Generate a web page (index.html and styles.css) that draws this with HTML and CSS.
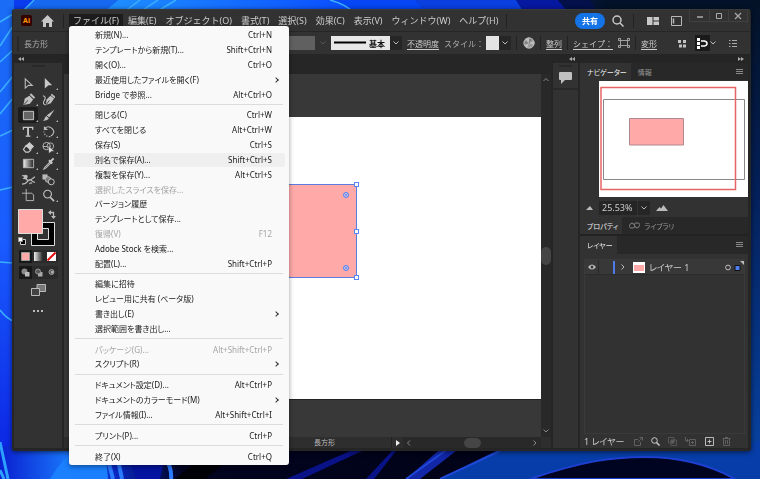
FILE: index.html
```html
<!DOCTYPE html>
<html lang="ja">
<head>
<meta charset="UTF-8">
<title>Illustrator</title>
<link rel="stylesheet" href="styles.css">
</head>
<body>
<svg class="wallpaper" viewBox="0 0 760 479" preserveAspectRatio="none" aria-hidden="true">
  <defs>
    <linearGradient id="sky"><stop offset="0" stop-color="#0a3cf0"/><stop offset=".5" stop-color="#0a2fd8"/><stop offset=".7" stop-color="#041a6a"/><stop offset=".8" stop-color="#031228"/><stop offset="1" stop-color="#031228"/></linearGradient>
    <linearGradient id="left" x2="0" y2="1"><stop offset="0" stop-color="#1a6cf5"/><stop offset=".5" stop-color="#1a5cff"/><stop offset="1" stop-color="#0a20e0"/></linearGradient>
    <linearGradient id="petal"><stop offset="0" stop-color="#1f90ff"/><stop offset="1" stop-color="#0a4cff"/></linearGradient>
    <linearGradient id="right" x2="0" y2="1"><stop offset="0" stop-color="#041226"/><stop offset=".4" stop-color="#04205a"/><stop offset="1" stop-color="#0845a8"/></linearGradient>
    <linearGradient id="floor"><stop offset="0" stop-color="#0a1fd0"/><stop offset=".1" stop-color="#1a80ff"/><stop offset=".15" stop-color="#0828c8"/><stop offset=".24" stop-color="#020420"/><stop offset="1" stop-color="#010210"/></linearGradient>
  </defs>
  <rect width="760" height="479" fill="url(#sky)"/>
  <rect width="14" height="479" fill="url(#left)"/>
  <rect x="748" width="12" height="479" fill="url(#right)"/>
  <rect y="446" width="760" height="33" fill="url(#floor)"/>
  <path d="M34 0H118L104 12H22z" fill="#1668f0"/>
  <path d="M118 0H330Q345 4 353 12H104z" fill="url(#petal)"/>
  <path d="M330 0H415L427 12H353Q345 4 330 0z" fill="#0546f5"/>
  <path d="M415 0H516L524 12H427z" fill="#0a3fe0"/>
  <path d="M516 0H558L568 12H524z" fill="#0618a0"/>
  <path d="M558 0H590L597 12H568z" fill="#03104a"/>
  <path d="M34 0L22 12M140 0L124 12M158 0L140 12M176 0L156 12M330 0Q345 4 353 12M0 22L13 14M0 46L13 26M0 62L13 50M0 92L13 76M0 114L13 98M0 136L13 130M0 190L13 187M0 262L13 263M0 310Q6 318 13 321" stroke="#3bb0ff" stroke-width="1.5" fill="none"/>
  <path d="M0 442L8 479M0 470L4 479" stroke="#2ba0ff" stroke-width="3" fill="none"/>
  <path d="M50 479Q62 458 80 446H105L108 479z" fill="#1a80ff"/>
  <path d="M108 460L113 479M118 460L122 479M166 460Q172 468 171 479M156 460L153 479" stroke="#2b7bff" stroke-width="4" fill="none"/>
  <path d="M130 460H164L160 479H136z" fill="#0414a0"/>
  <path d="M175 479L210 451H240L205 479z" fill="#010108"/>
  <path d="M286 479L350 451H362L302 479zM366 479L392 451H396L374 479z" fill="#0a1288"/>
  <path d="M406 479L438 451H456L420 479z" fill="#1226a8"/>
  <path d="M440 479L496 451H740L760 440V479z" fill="#073da8"/>
  <path d="M440 479L500 451M406 479L445 451" stroke="#1f48d8" stroke-width="2"/>
  <path d="M530 479C580 462 610 457 645 457S710 465 735 479z" fill="#010420" stroke="#1d40d0" stroke-width="2"/>
</svg>

<div class="window">
  <header class="menubar">
    <span class="logo">Ai</span>
    <button class="icon-button home" aria-label="ホーム"><svg width="13" height="12" viewBox="0 0 13 12"><path d="M6.500 0L13 6.500H11V12H8V8H5V12H2V6.500H0z" fill="#c8c8c8"/></svg></button>
    <span class="rule"></span>
    <nav class="menus">
      <button class="open">ファイル(F)</button>
      <button>編集(E)</button>
      <button>オブジェクト(O)</button>
      <button>書式(T)</button>
      <button>選択(S)</button>
      <button>効果(C)</button>
      <button>表示(V)</button>
      <button>ウィンドウ(W)</button>
      <button>ヘルプ(H)</button>
    </nav>
    <span class="rule"></span>
    <div class="menubar-right">
      <button class="share">共有</button>
      <button class="icon-button search" aria-label="検索"><svg width="12" height="12" viewBox="0 0 12 12" fill="none" stroke="#c8c8c8" stroke-width="1.5"><circle cx="5" cy="5" r="4"/><path d="M8 8L11.500 11.500"/></svg></button>
      <span class="rule"></span>
      <button class="icon-button arrange" aria-label="ドキュメントレイアウト"><svg width="12" height="8" viewBox="0 0 12 8" fill="#c8c8c8"><path d="M0 0H5.500V8H0zM6.500 0H12V3.500H6.500zM6.500 4.500H12V8H6.500z"/></svg></button>
      <button class="icon-button" aria-label="ワークスペース"><svg width="11" height="10" viewBox="0 0 11 10" fill="none" stroke="#b8b8b8"><path d="M.5 .5H10.500V9.500H.5z"/><path d="M2.500 2.500V7.500" stroke-width="1.500"/></svg></button>
    </div>
    <div class="window-buttons">
      <button aria-label="最小化"><svg width="8" height="8"><path d="M1 5H7" stroke="#aaa" stroke-width="1.500"/></svg></button>
      <button aria-label="最大化"><svg width="8" height="8"><path d="M1.500 1.500H6.500V6.500H1.500z" stroke="#aaa" fill="none"/></svg></button>
      <button aria-label="閉じる"><svg width="8" height="8"><path d="M1 1L7 7M7 1L1 7" stroke="#aaa" stroke-width="1.200"/></svg></button>
    </div>
  </header>

  <div class="control-bar">
    <span class="grip"></span>
    <span class="object-type">長方形</span>
    <div class="control-items">
      <span class="disabled-box"></span>
      <svg class="caret dim" width="6" height="4"><path d="M.5 .5L3 3L5.500 .5" /></svg>
      <div class="picker profile">
        <svg width="32" height="13"><path d="M0 6.500H32" stroke="#000" stroke-width="2"/></svg>
        <select aria-label="ブラシ定義"><option>基本</option></select>
        <svg class="caret" width="6" height="4"><path d="M.5 .5L3 3L5.500 .5"/></svg>
      </div>
      <a href="#" class="opacity">不透明度</a>
      <label class="style-label" for="style">スタイル：</label>
      <div class="picker swatch-picker">
        <select id="style"><option></option></select>
        <svg class="caret" width="6" height="4"><path d="M.5 .5L3 3L5.500 .5"/></svg>
      </div>
      <span class="rule"></span>
      <button class="icon-button recolor" aria-label="オブジェクトを再配色"><svg width="12" height="12" viewBox="0 0 12 12"><circle cx="6" cy="6" r="5.500" fill="#9a9a9a"/><path d="M6 6L2 2A5.500 5.500 0 0 1 6 .5zM6 6L11 4A5.500 5.500 0 0 1 11 8zM6 6L4 11A5.500 5.500 0 0 1 1 8z" fill="#c0c0c0"/><path d="M6 6L6 .5A5.500 5.500 0 0 1 10 2zM6 6L1 8A5.500 5.500 0 0 1 1 4z" fill="#808080"/><circle cx="6" cy="6" r="5" fill="none" stroke="#b8b8b8"/></svg></button>
      <span class="rule"></span>
      <a href="#">整列</a>
      <span class="rule"></span>
      <a href="#">シェイプ：</a>
      <button class="icon-button" aria-label="分離"><svg width="12" height="10" viewBox="0 0 12 10" fill="none" stroke="#bbb"><path d="M2.500 2.500H9.500V7.500H2.500z" stroke-width=".8"/><path d="M.5 .5H2.500V2.500H.5zM9.500 .5H11.500V2.500H9.500zM.5 7.500H2.500V9.500H.5zM9.500 7.500H11.500V9.500H9.500z" stroke-width=".8"/></svg></button>
      <span class="rule"></span>
      <a href="#">変形</a>
      <button class="icon-button grid-snap" aria-label="整列パネル"><svg width="9" height="9" viewBox="0 0 9 9" fill="#c4c4c4"><path d="M0 1H3V4H0zM5 1H8V4H5zM1 5.500H4V8.500H1zM5 5.500H8V8.500H5z"/></svg></button>
      <div class="snap">
        <button class="icon-button snap-on" aria-label="ピクセルにスナップ"><svg width="11" height="11" viewBox="0 0 11 11"><path d="M0 0H3V3H0zM0 4H3V7H0zM0 8H3V11H0z" fill="#fff"/><path d="M4 3H7.500Q10 3.500 10 5.500T7.500 8H4" fill="none" stroke="#fff" stroke-width="1.500"/></svg></button>
        <svg class="caret" width="6" height="4"><path d="M.5 .5L3 3L5.500 .5"/></svg>
      </div>
      <button class="icon-button" aria-label="オプション"><svg width="8" height="7" viewBox="0 0 8 7" stroke="#aaa"><path d="M0 .5H1.500M3 .5H8M0 3.500H1.500M3 3.500H8M0 6.500H1.500M3 6.500H8"/></svg></button>
    </div>
  </div>

  <main class="workspace">
    <aside class="tools">
      <div class="collapse"><svg width="6" height="4"><path d="M3 0V4L0 2zM6 0V4L3 2z" fill="#aaa"/></svg></div>
      <div class="gripper"></div>
      <div class="tool-grid">
        <button aria-label="選択"><svg viewBox="0 0 14 14" fill="none" stroke="#bbb" stroke-width="1.200"><path d="M3.500 2L11 9H7L3.500 12z"/></svg></button>
        <button class="more" aria-label="ダイレクト選択"><svg viewBox="0 0 14 14"><path d="M3 1L11 9H7L3 12.500z" fill="#c8c8c8"/></svg></button>
        <button class="more" aria-label="ペン"><svg viewBox="0 0 14 14"><path d="M1.500 13L3 6L8 3L12 7L8.500 11.500z" fill="#c0c0c0"/><path d="M9 1L13.500 5.500" stroke="#c0c0c0" stroke-width="2.200"/><path d="M2 12.500L6.500 8" stroke="#323232"/></svg></button>
        <button aria-label="曲線"><svg viewBox="0 0 14 14"><path d="M4 13L5 7L9 3L13 6L9.500 11z" fill="#c0c0c0"/><path d="M10 1.500L14 5" stroke="#c0c0c0" stroke-width="2"/><path d="M4.500 12.500L8 8" stroke="#323232"/><path d="M1 3Q5 4 2.500 8T4 13" fill="none" stroke="#c0c0c0" stroke-width="1.200"/></svg></button>
        <button class="more selected" aria-label="長方形"><svg viewBox="0 0 14 14"><path d="M1.500 2.500H12.500V11.500H1.500z" fill="#666" stroke="#ccc"/></svg></button>
        <button class="more" aria-label="ブラシ"><svg viewBox="0 0 14 14"><path d="M13.500 .5L8 9L5 7z" fill="#c0c0c0"/><path d="M4.500 7.500L7.500 10Q6 13 1 12.500Q3.500 11 3 9.500z" fill="#c0c0c0"/></svg></button>
        <button class="more" aria-label="文字"><svg viewBox="0 0 14 14" fill="none" stroke="#c8c8c8"><path d="M1.500 5V2.500H11.500V5" stroke-width="1.400"/><path d="M6.500 3V11.500" stroke-width="2"/><path d="M4 12H9" stroke-width="1.400"/></svg></button>
        <button class="more" aria-label="回転"><svg viewBox="0 0 14 14" fill="none" stroke="#bbb" stroke-width="1.200"><path d="M3 3.500Q7 0 11 4T9.500 12"/><path d="M9 12.500Q3 13 2 7" stroke-dasharray="1.500 1.500"/><path d="M2 1V5.500H6.500z" fill="#bbb" stroke="none"/></svg></button>
        <button class="more" aria-label="消しゴム"><svg viewBox="0 0 14 14"><path d="M8 1L13 6L9 10L4 5z" fill="#ccc"/><path d="M4.500 4.700L9.500 9.700L7 12H4L1.500 9z" fill="none" stroke="#ccc" stroke-width="1.200"/></svg></button>
        <button class="more" aria-label="シェイプ形成"><svg viewBox="0 0 14 14"><circle cx="5" cy="5.500" r="4" fill="none" stroke="#bbb"/><circle cx="9" cy="5.500" r="3.500" fill="none" stroke="#bbb"/><path d="M1 6H9" stroke="#bbb"/><path d="M6.500 5L13.500 11H10.500L7.500 13.500z" fill="#ddd" stroke="#323232" stroke-width=".6"/></svg></button>
        <button class="more" aria-label="グラデーション"><svg viewBox="0 0 14 14"><defs><linearGradient id="gray"><stop stop-color="#eee"/><stop offset="1" stop-color="#222"/></linearGradient></defs><path d="M1.500 2.500H12.500V11.500H1.500z" fill="url(#gray)" stroke="#bbb"/></svg></button>
        <button class="more" aria-label="スポイト"><svg viewBox="0 0 14 14"><path d="M9 5L3 11L2 13L4 12L10 6" fill="none" stroke="#bbb" stroke-width="1.200"/><path d="M7.500 3.500L11 7M9 5L12.500 1.500" stroke="#c8c8c8" stroke-width="2.200"/></svg></button>
        <button aria-label="パペットワープ"><svg viewBox="0 0 14 14" fill="none" stroke="#bbb" stroke-width="1.300"><path d="M0 3Q3 2 4 5T7 8T14 4M0 12Q4 12 6 9T10 8T14 10M1 6Q3 5 5 7M8 12Q9 10 11 11"/><circle cx="4" cy="4" r="1.500" fill="#bbb"/></svg></button>
        <button aria-label="ブレンド"><svg viewBox="0 0 14 14"><path d="M.5 1.500H6V7H.5z" fill="#bbb"/><circle cx="6.500" cy="7" r="3" fill="#777" stroke="#bbb"/><circle cx="10" cy="9.500" r="3.200" fill="#333" stroke="#ccc"/></svg></button>
        <button aria-label="アートボード"><svg viewBox="0 0 14 14" fill="none" stroke="#bbb"><path d="M4.500 0V12.500H12.500V6.500L10.500 4.500H0"/></svg></button>
        <button class="more" aria-label="ズーム"><svg viewBox="0 0 14 14" fill="none" stroke="#c0c0c0"><circle cx="6" cy="5.500" r="4.200" stroke-width="1.200"/><path d="M9 9L13 13" stroke-width="1.800"/></svg></button>
      </div>
      <svg class="fill-stroke" width="40" height="38" viewBox="0 0 40 38">
        <path d="M13.500 13.500H36.500V36.500H13.500z" fill="#000" stroke="#ddd"/>
        <path d="M19.500 19.500H30.500V30.500H19.500z" fill="#323232" stroke="#ddd"/>
        <path d="M.5 .5H24.500V24.500H.5z" fill="#ffa9a9" stroke="#ddd"/>
        <path d="M32 3.500H35.500V8" fill="none" stroke="#bbb" stroke-width="1.300"/><path d="M30 3.500L33 1V6zM35.500 10L33 7H38z" fill="#bbb"/>
        <path d="M2.500 30.500H7.500V35.500H2.500z" fill="#000" stroke="#ccc"/><path d="M.5 28.500H4.500V32.500H.5z" fill="#fff" stroke="#999"/>
      </svg>
      <div class="modes">
        <button class="pressed" aria-label="カラー"><svg viewBox="0 0 9 9"><path d="M.5 .5H8.500V8.500H.5z" fill="#ffa9a9" stroke="#999"/></svg></button>
        <button aria-label="グラデーション塗り"><svg viewBox="0 0 9 9"><path d="M0 0H9V9H0z" fill="url(#gray)"/></svg></button>
        <button aria-label="なし"><svg viewBox="0 0 9 9"><path d="M0 0H9V9H0z" fill="#fff"/><path d="M.5 8.500L8.500 .5" stroke="#e01010" stroke-width="2"/></svg></button>
      </div>
      <div class="modes">
        <button class="pressed" aria-label="標準描画"><svg viewBox="0 0 9 9"><circle cx="3.500" cy="3.500" r="3" fill="#888"/><path d="M4 4H8.500V8.500H4z" fill="#bbb"/></svg></button>
        <button aria-label="背面描画"><svg viewBox="0 0 9 9"><path d="M4 4H8.500V8.500H4z" fill="#aaa"/><circle cx="4" cy="3.500" r="2.500" fill="#555" stroke="#999"/></svg></button>
        <button aria-label="内側描画"><svg viewBox="0 0 9 9"><circle cx="4.500" cy="4" r="2.500" fill="#555" stroke="#999"/><path d="M4 3H6.500V5.500H4z" fill="#aaa"/></svg></button>
      </div>
      <button class="icon-button" aria-label="スクリーンモード"><svg width="15" height="12" viewBox="0 0 15 12" fill="#777" stroke="#bbb"><path d="M6 .5H14.500V7.500H6z"/><path d="M.5 4.500H8.500V11.500H.5z" fill="#444"/></svg></button>
      <button class="icon-button dots" aria-label="ツールバーを編集"><svg width="10" height="2" fill="#bbb"><path d="M0 0H2V2H0zM4 0H6V2H4zM8 0H10V2H8z"/></svg></button>
    </aside>

    <section class="document">
      <div class="doc-tabs"></div>
      <div class="doc-view">
        <div class="canvas">
          <div class="artboard">
            <div class="shape">
              <i class="handle top"></i><i class="handle middle"></i><i class="handle bottom"></i>
              <i class="corner upper"></i><i class="corner lower"></i>
            </div>
          </div>
        </div>
        <div class="scroll-y">
          <svg class="caret scroll" width="6" height="4"><path d="M.5 3L3 .5L5.500 3"/></svg>
          <span class="thumb"></span>
          <svg class="caret scroll" width="6" height="4"><path d="M.5 .5L3 3L5.500 .5"/></svg>
        </div>
      </div>
      <div class="status-bar">
        <span class="status-text">長方形</span>
        <button class="icon-button play" aria-label="ステータス"><svg width="4" height="6"><path d="M0 0V6L4 3z" fill="#eee"/></svg></button>
        <div class="scroll-x">
          <svg class="caret scroll" width="4" height="6"><path d="M3 .5L.5 3L3 5.500"/></svg>
          <span class="thumb"></span>
          <svg class="caret scroll" width="4" height="6"><path d="M.5 .5L3 3L.5 5.500"/></svg>
        </div>
      </div>
    </section>

    <aside class="comment-dock">
      <div class="collapse"><svg width="6" height="4"><path d="M3 0V4L0 2zM6 0V4L3 2z" fill="#aaa"/></svg></div>
      <div class="gripper"></div>
      <button class="icon-button" aria-label="コメント"><svg width="13" height="12" viewBox="0 0 13 12"><path d="M1 0H12Q13 0 13 1V7Q13 8 12 8H6L2 12V8H1Q0 8 0 7V1Q0 0 1 0z" fill="#c0c0c0"/></svg></button>
    </aside>

    <aside class="panels">
      <div class="collapse"><svg width="6" height="4"><path d="M0 0V4L3 2zM3 0V4L6 2z" fill="#aaa"/></svg></div>
      <div class="tabs">
        <button class="active">ナビゲーター</button>
        <button>情報</button>
        <svg class="panel-menu" width="7" height="6" stroke="#888"><path d="M0 .5H7M0 2.500H7M0 4.500H7"/></svg>
      </div>
      <div class="navigator">
        <svg viewBox="0 0 149 116">
          <path d="M0 0H149V116H0z" fill="#fff"/>
          <path d="M4.500 18.500H145.500V98.500H4.500z" fill="none" stroke="#888"/>
          <path d="M30.500 37.500H84.500V64H30.500z" fill="#ffa9a9" stroke="#b08890"/>
          <path d="M2 6.500H136.500V108.500H2z" fill="none" stroke="#e86464" stroke-width="1.500"/>
        </svg>
      </div>
      <div class="zoom-row">
        <svg width="7" height="4"><path d="M0 4L2.500 1.500L4 0L7 4z" fill="#bbb"/></svg>
        <div class="picker zoom-picker">
          <select aria-label="ズーム"><option>25.53%</option></select>
          <svg class="caret" width="6" height="4"><path d="M.5 .5L3 3L5.500 .5"/></svg>
        </div>
        <svg width="12" height="6"><path d="M0 6L3.500 2L5 3.500L7.500 0L12 6z" fill="#bbb"/></svg>
      </div>
      <div class="tabs">
        <button class="active">プロパティ</button>
        <button><svg width="11" height="7" fill="none" stroke="#888"><path d="M5.500 3.500Q4.500 1 3 1T.5 3.500T3 6T5.500 3.500T8 1T10.500 3.500T8 6T5.500 3.500"/></svg>ライブラリ</button>
      </div>
      <div class="tabs layer-tabs">
        <button class="active">レイヤー</button>
        <svg class="panel-menu" width="7" height="6" stroke="#888"><path d="M0 .5H7M0 2.500H7M0 4.500H7"/></svg>
      </div>
      <div class="layers">
        <div class="layer">
          <button class="icon-button eye" aria-label="表示"><svg width="8" height="6" viewBox="0 0 8 6"><path d="M0 3Q4 -2 8 3Q4 8 0 3z" fill="#c0c0c0"/><circle cx="4" cy="3" r="1.500" fill="#333"/></svg></button>
          <span class="layer-color"></span>
          <svg class="caret" width="4" height="6"><path d="M.5 .5L3 3L.5 5.500"/></svg>
          <span class="layer-thumb"></span>
          <span class="layer-name">レイヤー 1</span>
          <svg width="19" height="14" viewBox="0 0 19 14"><circle cx="3" cy="7.500" r="2.400" fill="none" stroke="#bbb"/><path d="M10 5.500H15V10.500H10z" fill="#5080f0" stroke="#111"/><path d="M15 1H19V5z" fill="#bbb"/></svg>
        </div>
      </div>
      <footer class="layer-footer">
        <span class="layer-count">1 レイヤー</span>
        <button class="icon-button" aria-label="書き出し"><svg width="9" height="9" fill="none" stroke="#606060"><path d="M4 2.500H.5V8.500H6.500V5M4 5L8.500 .5M5.500 .5H8.500V3.500"/></svg></button>
        <button class="icon-button" aria-label="レイヤーを検索"><svg width="9" height="9" fill="none" stroke="#ccc"><circle cx="3.500" cy="3.500" r="2.800"/><path d="M5.500 5.500L8.500 8.500" stroke-width="1.500"/></svg></button>
        <button class="icon-button" aria-label="マスク"><svg width="9" height="9" fill="none" stroke="#555"><path d="M.5 .5H6V6H.5zM3 3H8.500V8.500H3z"/><path d="M3 3H6V6H3z" fill="#606060"/></svg></button>
        <button class="icon-button" aria-label="サブレイヤー"><svg width="11" height="9" fill="none" stroke="#606060"><path d="M4.500 2.500H10.500V8.500H4.500zM7.500 4V7M6 5.500H9M.5 0V3.500H3M2 2L3.500 3.500L2 5"/></svg></button>
        <button class="icon-button" aria-label="新規レイヤー"><svg width="9" height="9" fill="none" stroke="#bbb"><path d="M.5 .5H8.500V8.500H.5zM4.500 2.500V6.500M2.500 4.500H6.500"/></svg></button>
        <button class="icon-button" aria-label="削除"><svg width="9" height="9" fill="none" stroke="#606060"><path d="M.5 1.500H8.500M3 .5H6M1.500 2V8.500H7.500V2M3.500 3V7M5.500 3V7"/></svg></button>
      </footer>
    </aside>
  </main>

  <!-- File menu -->
  <div class="file-menu" role="menu">
    <button>新規(N)...<kbd>Ctrl+N</kbd></button>
    <button>テンプレートから新規(T)...<kbd>Shift+Ctrl+N</kbd></button>
    <button>開く(O)...<kbd>Ctrl+O</kbd></button>
    <button class="submenu">最近使用したファイルを開く(F)</button>
    <button>Bridge で参照...<kbd>Alt+Ctrl+O</kbd></button>
    <hr>
    <button>閉じる(C)<kbd>Ctrl+W</kbd></button>
    <button>すべてを閉じる<kbd>Alt+Ctrl+W</kbd></button>
    <button>保存(S)<kbd>Ctrl+S</kbd></button>
    <button class="hover">別名で保存(A)...<kbd>Shift+Ctrl+S</kbd></button>
    <button>複製を保存(Y)...<kbd>Alt+Ctrl+S</kbd></button>
    <button disabled>選択したスライスを保存...</button>
    <button>バージョン履歴</button>
    <button>テンプレートとして保存...</button>
    <button disabled>復帰(V)<kbd>F12</kbd></button>
    <button>Adobe Stock を検索...</button>
    <button>配置(L)...<kbd>Shift+Ctrl+P</kbd></button>
    <hr>
    <button>編集に招待</button>
    <button>レビュー用に共有 (ベータ版)</button>
    <button class="submenu">書き出し(E)</button>
    <button>選択範囲を書き出し...</button>
    <hr>
    <button disabled>パッケージ(G)...<kbd>Alt+Shift+Ctrl+P</kbd></button>
    <button class="submenu">スクリプト(R)</button>
    <hr>
    <button>ドキュメント設定(D)...<kbd>Alt+Ctrl+P</kbd></button>
    <button class="submenu">ドキュメントのカラーモード(M)</button>
    <button>ファイル情報(I)...<kbd>Alt+Shift+Ctrl+I</kbd></button>
    <hr>
    <button>プリント(P)...<kbd>Ctrl+P</kbd></button>
    <hr>
    <button>終了(X)<kbd>Ctrl+Q</kbd></button>
  </div>
</div>
</body>
</html>
```
FILE: styles.css
```css
*, *::after {
  box-sizing: border-box;
}
body {
  margin: 0;
  height: 100vh;
  display: flex;
  padding: 9px 9px 28px 12px;
  background-color: #031228;
  font-family: "Noto Sans", "Noto Sans CJK JP", sans-serif;
  font-size: 8px;
  color: #ccc;
  overflow: hidden;
}
button, select, kbd {
  font: inherit;
  font-feature-settings: inherit;
  color: inherit;
}
button {
  background: none;
  border: none;
  padding: 0;
  white-space: nowrap;
}
svg {
  flex: none;
  display: block;
}
a {
  color: #ccc;
  text-underline-offset: 2px;
  white-space: nowrap;
}
.wallpaper {
  position: fixed;
  inset: 0;
  width: 100%;
  height: 100%;
}
.window {
  position: relative;
  flex: 1;
  min-width: 0;
  display: flex;
  flex-direction: column;
  background-color: #323232;
  border: 1px solid #282828;
  border-top-color: #3a3a3a;
  border-radius: 3px;
  box-shadow: 0 1px 5px rgba(0, 0, 0, 0.6);
}
.icon-button {
  display: flex;
  align-items: center;
  justify-content: center;
}
.rule {
  width: 1px;
  height: 14px;
  background-color: #222;
}
.caret {
  fill: none;
  stroke: #bbb;
}
.caret.dim {
  stroke: #555;
}
.caret.scroll {
  stroke: #888;
}

/* Menu bar */
.menubar {
  height: 21px;
  flex: none;
  display: flex;
  align-items: center;
  padding-left: 8px;
}
.logo {
  width: 11px;
  height: 11px;
  border-radius: 2px;
  background-color: #330000;
  color: #ff9a00;
  font-size: 7px;
  font-weight: bold;
  line-height: 11px;
  text-align: center;
}
.home {
  margin: 0 9px;
}
.menus {
  display: flex;
  gap: 1px;
  margin: 0 4px 0 5px;
  font-size: 9px;
}
.menus button {
  height: 13px;
  line-height: 13px;
  padding: 0 4px;
}
.menus .open {
  background-color: #1c1c1c;
}
.menubar-right {
  margin-left: auto;
  display: flex;
  align-items: center;
}
.share {
  width: 30px;
  height: 16px;
  border-radius: 8px;
  background-color: #1473e6;
  color: #fff;
  font-weight: bold;
}
.search {
  margin: 0 9px 0 7px;
}
.arrange {
  margin: 0 12px 0 13px;
}
.window-buttons {
  align-self: flex-start;
  display: flex;
  margin: 0 2px 0 7px;
  border: 1px solid #404040;
  border-top: none;
}
.window-buttons button {
  width: 19px;
  height: 11px;
  display: flex;
  align-items: center;
  justify-content: center;
}
.window-buttons button + button {
  border-left: 1px solid #404040;
}

/* Control bar */
.control-bar {
  height: 23px;
  flex: none;
  display: flex;
  align-items: center;
  padding: 0 13px 0 4px;
  border-top: 1px solid #262626;
}
.grip {
  width: 2px;
  height: 15px;
  background-color: #282828;
}
.object-type {
  margin-left: 5px;
  color: #aaa;
}
.control-items {
  margin-left: auto;
  display: flex;
  align-items: center;
  gap: 5px;
}
.disabled-box {
  width: 60px;
  height: 14px;
  background-color: #606060;
}
.picker {
  display: flex;
  align-items: center;
  height: 14px;
  padding-right: 3px;
  background-color: #262626;
}
.picker select {
  appearance: none;
  height: 14px;
  padding: 0;
  margin-right: 3px;
  border: none;
  border-radius: 0;
}
.profile svg:first-child {
  height: 14px;
  box-sizing: content-box;
  padding: 0 3px;
  background-color: #e8e8e8;
}
.profile select {
  width: 21px;
  background-color: #e8e8e8;
  color: #111;
  font-weight: bold;
}
.style-label {
  margin-right: -3px;
  color: #aaa;
  white-space: nowrap;
}
.swatch-picker select {
  width: 13px;
  background-color: #e4e4e4;
}
.recolor {
  margin-left: 1px;
}
.grid-snap {
  margin-left: 16px;
}
.snap {
  display: flex;
  align-items: center;
  margin: 0 8px 0 3px;
}
.snap-on {
  width: 15px;
  height: 16px;
  background-color: #1a1a1a;
}

/* Workspace */
.workspace {
  flex: 1;
  min-height: 0;
  display: flex;
  gap: 2px;
  padding: 0 2px 2px 1px;
  background-color: #252525;
}
.collapse {
  height: 9px;
  flex: none;
  width: 100%;
  display: flex;
  align-items: center;
  padding: 0 4px;
  background-color: #252525;
}
.gripper {
  width: 13px;
  height: 2px;
  margin-top: 2px;
  background-color: #282828;
}
.tools {
  width: 48px;
  flex: none;
  display: flex;
  flex-direction: column;
  align-items: center;
  background-color: #323232;
}
.tool-grid {
  display: grid;
  grid-template-columns: 20px 20px;
  grid-auto-rows: 16px;
  margin: 8px 0 6px;
}
.tool-grid button {
  position: relative;
  display: flex;
  align-items: center;
  justify-content: center;
  border-radius: 2px;
}
.tool-grid svg {
  width: 13px;
  height: 13px;
}
.tool-grid .selected {
  background-color: #1c1c1c;
}
.more::after {
  content: "";
  position: absolute;
  right: 0;
  bottom: 1px;
  border: 1px solid transparent;
  border-right-color: #bbb;
  border-bottom-color: #bbb;
}
.fill-stroke {
  margin-bottom: 3px;
}
.modes {
  display: flex;
  margin-bottom: 3px;
  background-color: #2a2a2a;
}
.modes button {
  width: 13px;
  height: 13px;
  display: flex;
  align-items: center;
  justify-content: center;
}
.modes svg {
  width: 9px;
  height: 9px;
}
.modes .pressed {
  background-color: #181818;
}
.modes + .icon-button {
  margin-top: 2px;
}
.dots {
  margin-top: 14px;
}

/* Document */
.document {
  flex: 1;
  min-width: 0;
  display: flex;
  flex-direction: column;
}
.doc-tabs {
  height: 20px;
  flex: none;
  background-color: #262626;
}
.doc-view {
  flex: 1;
  min-height: 0;
  display: flex;
}
.canvas {
  flex: 1;
  display: flex;
  padding: 43px 0 37px 5px;
  background-color: #383838;
}
.artboard {
  flex: 1;
  position: relative;
  background-color: #fff;
  border-bottom: 1px solid #222;
}
.shape {
  position: absolute;
  left: 60px;
  top: 67px;
  width: 228px;
  height: 94px;
  background-color: #ffa9a9;
  border: 1px solid #5b7de0;
}
.handle, .corner {
  position: absolute;
  width: 5px;
  height: 5px;
  background-color: #fff;
  border: 1px solid #5b86f0;
}
.handle {
  right: -3px;
}
.handle.top {
  top: -3px;
}
.handle.middle {
  top: 44px;
}
.handle.bottom {
  bottom: -3px;
}
.corner {
  right: 7px;
  width: 6px;
  height: 6px;
  border-radius: 50%;
  background-color: #5b86f0;
  box-shadow: inset 0 0 0 1px #e8d0e0;
}
.corner.upper {
  top: 7px;
}
.corner.lower {
  bottom: 6px;
}
.scroll-y {
  width: 10px;
  display: flex;
  flex-direction: column;
  align-items: center;
  justify-content: space-between;
  padding: 4px 0;
  background-color: #292929;
}
.thumb {
  width: 17px;
  height: 10px;
  border-radius: 5px;
  background-color: #454545;
}
.scroll-y .thumb {
  width: 10px;
  height: 18px;
}
.status-bar {
  height: 11px;
  flex: none;
  display: flex;
  align-items: center;
  padding-right: 10px;
  background-color: #2e2e2e;
}
.status-text {
  flex: 1;
  padding-left: 250px;
  font-size: 7px;
  line-height: 11px;
  color: #bbb;
}
.play {
  width: 12px;
  height: 11px;
  border-left: 1px solid #222;
}
.scroll-x {
  width: 138px;
  height: 11px;
  display: flex;
  align-items: center;
  justify-content: space-between;
  padding: 0 4px;
  background-color: #292929;
}

/* Docked panels */
.comment-dock {
  width: 25px;
  flex: none;
  display: flex;
  flex-direction: column;
  align-items: center;
  background-color: #323232;
}
.comment-dock .collapse {
  justify-content: flex-end;
  padding: 0 3px;
}
.comment-dock .icon-button {
  width: 100%;
  height: 23px;
  border-bottom: 2px solid #282828;
}
.panels {
  width: 168px;
  flex: none;
  display: flex;
  flex-direction: column;
  background-color: #323232;
}
.panels .collapse {
  justify-content: flex-end;
}
.tabs {
  height: 17px;
  flex: none;
  display: flex;
  align-items: stretch;
  background-color: #282828;
  font-size: 7px;
  font-feature-settings: "palt";
}
.tabs button {
  display: flex;
  align-items: center;
  gap: 4px;
  padding: 0 4px 0 7px;
  color: #999;
}
.tabs .active {
  background-color: #323232;
  color: #eee;
}
.panel-menu {
  align-self: center;
  margin: 0 5px 0 auto;
}
.navigator {
  padding: 1px 0 4px 19px;
}
.navigator svg {
  width: 100%;
}
.zoom-row {
  flex: none;
  height: 14px;
  display: flex;
  align-items: center;
  gap: 6px;
  padding-left: 6px;
  margin-bottom: 2px;
}
.zoom-picker select {
  width: 39px;
  padding-left: 3px;
  background-color: #252525;
  border-right: 1px solid #323232;
  font-size: 9px;
  line-height: 14px;
}
.layer-tabs {
  height: 20px;
  border-top: 2px solid #222;
}
.layers {
  flex: 1;
  margin: 5px 3px 0 4px;
  border: 1px solid #3a3a3a;
}
.layer {
  height: 15px;
  display: flex;
  align-items: center;
  background-color: #383838;
  border-bottom: 1px solid #2a2a2a;
}
.eye {
  width: 14px;
  border-right: 1px solid #2a2a2a;
  height: 15px;
}
.layer-color {
  width: 2px;
  height: 13px;
  margin: 0 6px 0 14px;
  background-color: #4f7ae8;
}
.layer-thumb {
  width: 12px;
  height: 11px;
  margin: 0 4px 0 8px;
  border: solid #fff;
  border-width: 3px 1px 2px;
  background-color: #ffa9a9;
}
.layer-name {
  flex: 1;
  font-size: 9px;
  font-feature-settings: "palt";
}
.layer-footer {
  height: 14px;
  flex: none;
  display: flex;
  align-items: center;
  justify-content: space-between;
  padding: 0 17px 0 4px;
}
.layer-count {
  margin-right: 1px;
  font-size: 9px;
  font-feature-settings: "palt";
}

/* File menu */
.file-menu {
  position: absolute;
  left: 56px;
  top: 16px;
  width: 220px;
  height: 439px;
  display: flex;
  flex-direction: column;
  padding: 2px 4px 1px 5px;
  background-color: #f9f9f9;
  color: #1a1a1a;
  border-radius: 3px;
  box-shadow: 0 2px 5px rgba(0, 0, 0, 0.4);
  font-feature-settings: "palt";
}
.file-menu button {
  flex: 1;
  min-height: 0;
  display: flex;
  align-items: center;
  padding: 0 13px 0 21px;
  border-radius: 2px;
  line-height: 12px;
  white-space: pre;
}
.file-menu button:hover, .file-menu .hover {
  background-color: #efefef;
}
.file-menu button:disabled {
  color: #a5a5a5;
}
.file-menu kbd {
  margin-left: auto;
}
.file-menu .submenu {
  padding-right: 7px;
}
.submenu::after {
  content: "";
  width: 4px;
  height: 4px;
  margin-left: auto;
  border: solid #333;
  border-width: 1px 1px 0 0;
  transform: rotate(45deg);
}
.file-menu hr {
  width: 208px;
  height: 1px;
  margin: 2px 1px 3px;
  border: none;
  background-color: #dcdcdc;
}
```
